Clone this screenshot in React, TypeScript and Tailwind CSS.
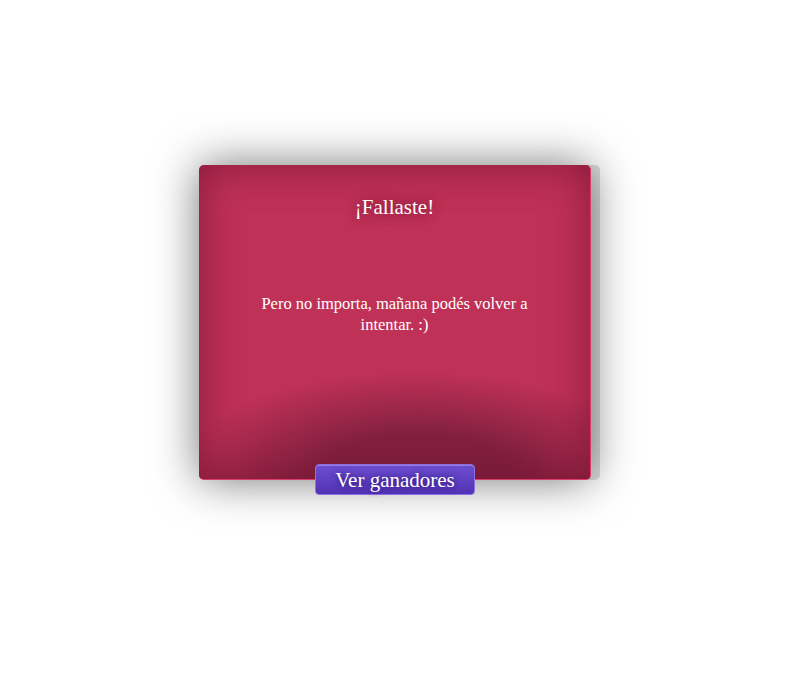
export default function App() {
  return (
    <div className="min-h-[700px] w-full bg-white pt-[165px]" style={{ fontFamily: '"Liberation Serif", Georgia, serif' }}>
      <div className="mx-auto flex w-[392px] flex-col items-center">
        <div className="relative h-[315px] w-full overflow-hidden rounded-[5px] border-r border-b border-[#dc3c66] bg-[#bf3157] shadow-[9px_0_0_rgba(0,0,0,0.13),0_0_45px_rgba(0,0,0,0.55)]">
          <div className="flex h-full flex-col items-center bg-[radial-gradient(ellipse_64%_34%_at_56%_100%,#80203e_0%,#80203e_40%,rgba(128,32,62,0)_100%)] px-[50px] pt-[30px] shadow-[inset_0_0_40px_rgba(110,15,45,0.7)]">
            <h1 className="text-[21px] leading-[24px] text-white [text-shadow:0_0_12px_rgba(110,15,45,0.9)]">
              ¡Fallaste!
            </h1>
            <p className="mt-[74px] text-center text-[16.5px] leading-[21px] text-white">
              Pero no importa, mañana podés volver a intentar. :)
            </p>
          </div>
        </div>
        <button className="relative z-10 -mt-[16px] h-[31px] w-[160px] rounded-[4px] border border-[#8b70e6] bg-gradient-to-b from-[#6d4ed0] to-[#5232b4] text-[21px] leading-[28px] text-white shadow-[inset_0_1px_0_rgba(255,255,255,0.25)] [text-shadow:0_0_6px_rgba(40,10,100,0.9)]">
          Ver ganadores
        </button>
      </div>
    </div>
  )
}
